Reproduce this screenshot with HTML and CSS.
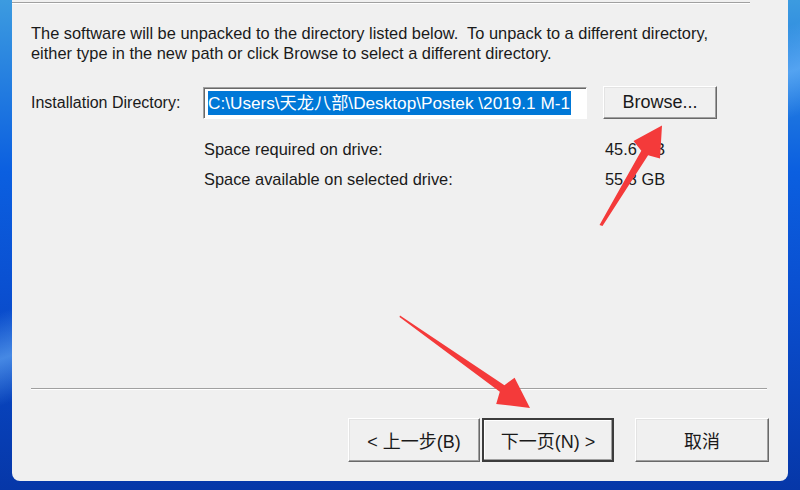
FILE: index.html
```html
<!DOCTYPE html>
<html lang="en">
<head>
    <meta charset="UTF-8">
    <meta name="viewport" content="width=device-width, initial-scale=1.0">
    <title>Unpack</title>
    <link rel="stylesheet" href="styles.css">
</head>
<body>

    <div class="desktop">
        <div class="dialog">
            <div class="etched top"></div>

            <p class="intro">The software will be unpacked to the directory listed below.&nbsp; To unpack to a different directory,<br>either type in the new path or click Browse to select a different directory.</p>

            <div class="dir-row">
                <label for="dir" class="dir-label">Installation Directory:</label>
                <div class="textbox" id="dir"><span class="selected">C:\Users\天龙八部\Desktop\Postek \2019.1 M-1</span></div>
                <button class="btn browse">Browse...</button>
            </div>

            <div class="space">
                <div class="space-row">
                    <span class="space-label">Space required on drive:</span>
                    <span class="space-value">45.6 GB</span>
                </div>
                <div class="space-row">
                    <span class="space-label">Space available on selected drive:</span>
                    <span class="space-value">55.8 GB</span>
                </div>
            </div>

            <div class="filler"></div>

            <div class="etched bottom"></div>

            <div class="actions">
                <div class="pair">
                    <button class="btn wide">&lt; 上一步(B)</button>
                    <button class="btn wide default">下一页(N) &gt;</button>
                </div>
                <button class="btn wide cancel">取消</button>
            </div>
        </div>

        <!-- red pointers drawn over the dialog -->
        <svg class="marks" width="800" height="490" viewBox="0 0 800 490">
            <polygon fill="#f43a3a" points="599.5,225 641.3,150.8 633.5,141 662,125.5 660,158.5 648.1,155.2 602.5,226"/>
            <polygon fill="#f43a3a" points="400,315.5 504.4,385.2 514.6,377.7 530,408 496.2,403.9 499.8,391.8 399.5,317"/>
        </svg>
    </div>

</body>
</html>
```
FILE: styles.css
```css
html, body{
    margin: 0;
    padding: 0;
}
body{
    font-family: "Liberation Sans", Arial, "Noto Sans CJK SC", sans-serif;
    font-size: 16.4px;
    color: #1a1a1a;
}
.desktop{
    position: relative;
    width: 800px;
    height: 490px;
    overflow: hidden;
    background:
        linear-gradient(160deg, rgba(120,200,255,0.0) 40%, rgba(120,190,255,0.55) 46%, rgba(0,0,0,0) 52%),
        linear-gradient(180deg, #3c9be0 0%, #0b5fe0 35%, #0a4fd0 60%, #0637a8 100%);
}
.dialog{
    display: flex;
    flex-direction: column;
    margin: 0 12px;
    height: 481px;
    background: #f0f0f0;
    border-radius: 0 0 8px 8px;
}

/* etched lines */
.etched{
    height: 0;
    border-top: 1px solid #a0a0a0;
    border-bottom: 1px solid #ffffff;
}
.etched.top{
    margin-top: 2px;
    width: 738px;
}
.etched.bottom{
    margin: 0 21px 0 19px;
}

.intro{
    margin: 19px 0 0 19px;
    line-height: 20px;
}

/* directory row */
.dir-row{
    display: flex;
    align-items: center;
    margin: 23px 0 0 19px;
}
.dir-label{
    width: 172px;
    font-size: 16px;
}
.textbox{
    display: flex;
    align-items: center;
    box-sizing: border-box;
    width: 384px;
    height: 32px;
    padding: 0 3px;
    background: #ffffff;
    border: 1px solid;
    border-color: #a0a0a0 #ffffff #ffffff #a0a0a0;
    box-shadow: inset 1px 1px 0 #696969;
}
.selected{
    display: inline-block;
    height: 24px;
    line-height: 24px;
    padding-right: 1px;
    margin-left: 1px;
    background: #0078d7;
    color: #ffffff;
    font-size: 17.2px;
    white-space: nowrap;
}

.btn{
    box-sizing: border-box;
    font-family: inherit;
    font-size: 18px;
    color: #1a1a1a;
    background: #f0f0f0;
    border: 1px solid;
    border-color: #ffffff #696969 #696969 #ffffff;
    box-shadow: inset -1px -1px 0 #a0a0a0, inset 1px 1px 0 #e3e3e3;
    padding: 0;
}
.btn.browse{
    width: 114px;
    height: 33px;
    margin-left: 16px;
}

/* space info */
.space{
    display: flex;
    flex-direction: column;
    gap: 12px;
    margin: 21px 0 0 192px;
}
.space-row{
    display: flex;
    line-height: 18px;
}
.space-label{
    width: 401px;
}

.filler{
    flex: 1;
}

/* bottom buttons */
.actions{
    display: flex;
    justify-content: flex-end;
    align-items: center;
    gap: 21px;
    margin: 28px 19px 19px 0;
}
.pair{
    display: flex;
    gap: 2px;
}
.btn.wide{
    width: 132px;
    height: 44px;
}
.btn.cancel{
    width: 134px;
}
.btn.default{
    border: 2px solid #3c3c3c;
    box-shadow: inset -1px -1px 0 #a0a0a0, inset 1px 1px 0 #ffffff;
}

.marks{
    position: absolute;
    left: 0;
    top: 0;
    pointer-events: none;
}
```
